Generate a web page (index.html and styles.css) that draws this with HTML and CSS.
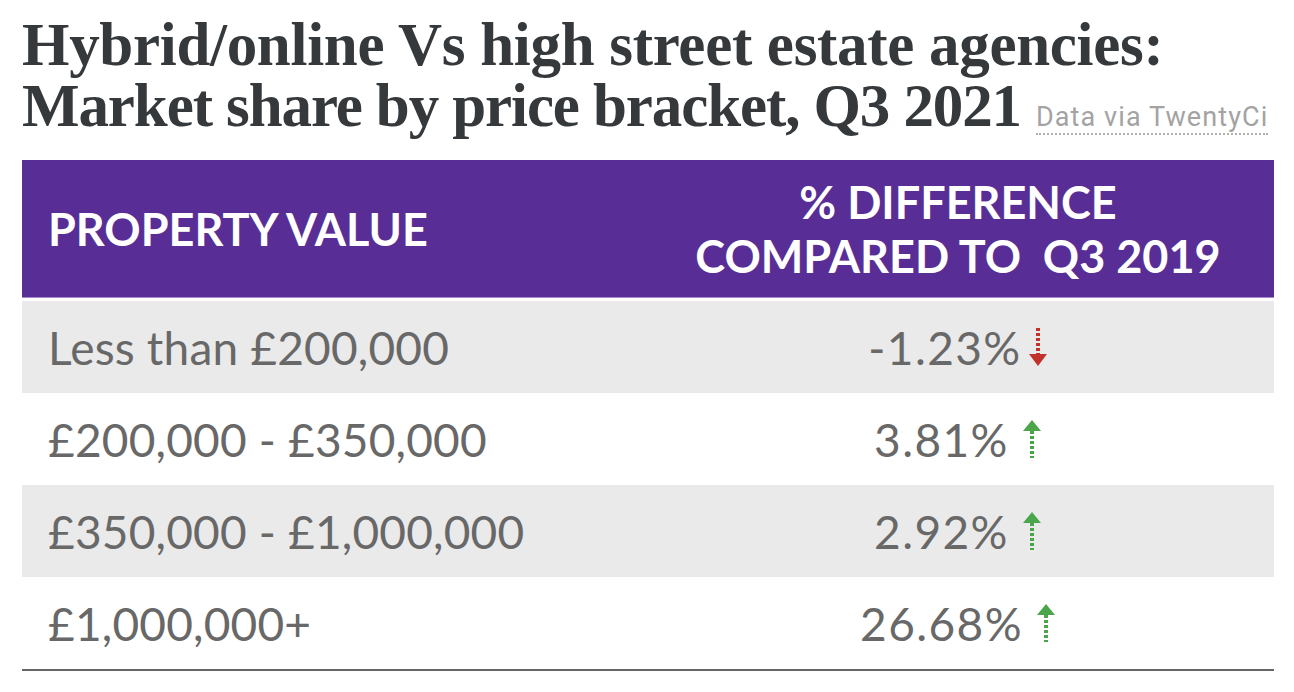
FILE: index.html
```html
<!DOCTYPE html>
<html lang="en">
<head>
<meta charset="utf-8">
<title>Hybrid/online Vs high street estate agencies</title>
<link rel="stylesheet" href="styles.css">
</head>
<body>
<div class="page">
  <h1 class="title">Hybrid/online Vs high street estate agencies:<br><span class="line2">Market share by price bracket, Q3 2021</span> <a class="source" href="#">Data via TwentyCi</a></h1>
  <div class="table">
    <div class="row head">
      <div class="cell left">PROPERTY VALUE</div>
      <div class="cell right">% DIFFERENCE<br>COMPARED TO&nbsp; Q3 2019</div>
    </div>
    <div class="row shade">
      <div class="cell left">Less than £200,000</div>
      <div class="cell right"><span class="val">-1.23%</span><svg class="arrow down" viewBox="0 0 20 38" width="20" height="38"><line x1="10" y1="0" x2="10" y2="27" stroke="#c3312b" stroke-width="4" stroke-dasharray="3 2"/><polygon points="1,26 19,26 10,38" fill="#c3312b"/></svg></div>
    </div>
    <div class="row">
      <div class="cell left">£200,000 - £350,000</div>
      <div class="cell right"><span class="val">3.81%</span><svg class="arrow up" viewBox="0 0 20 38" width="20" height="38"><polygon points="10,0 19,11 1,11" fill="#4ba64b"/><line x1="10" y1="11" x2="10" y2="38" stroke="#4ba64b" stroke-width="4" stroke-dasharray="3 2"/></svg></div>
    </div>
    <div class="row shade">
      <div class="cell left">£350,000 - £1,000,000</div>
      <div class="cell right"><span class="val">2.92%</span><svg class="arrow up" viewBox="0 0 20 38" width="20" height="38"><polygon points="10,0 19,11 1,11" fill="#4ba64b"/><line x1="10" y1="11" x2="10" y2="38" stroke="#4ba64b" stroke-width="4" stroke-dasharray="3 2"/></svg></div>
    </div>
    <div class="row last">
      <div class="cell left">£1,000,000+</div>
      <div class="cell right"><span class="val">26.68%</span><svg class="arrow up" viewBox="0 0 20 38" width="20" height="38"><polygon points="10,0 19,11 1,11" fill="#4ba64b"/><line x1="10" y1="11" x2="10" y2="38" stroke="#4ba64b" stroke-width="4" stroke-dasharray="3 2"/></svg></div>
    </div>
  </div>
</div>
</body>
</html>
```
FILE: styles.css
```css
html, body {
  margin: 0;
  padding: 0;
  background: #ffffff;
}
.page {
  padding: 14px 20px 0 22px;
}
.title {
  margin: 0;
  font-family: "Liberation Serif", "DejaVu Serif", serif;
  font-weight: 700;
  font-size: 61px;
  line-height: 61px;
  color: #35393c;
  letter-spacing: -0.3px;
  white-space: nowrap;
}
.line2 {
  letter-spacing: -1.1px;
}
.source {
  font-family: Roboto, "Liberation Sans", sans-serif;
  font-weight: 400;
  font-size: 27px;
  line-height: 1;
  letter-spacing: 1.1px;
  color: #a3a3a3;
  text-decoration: none;
  border-bottom: 2px dotted #b0b0b0;
}
.table {
  margin-top: 24px;
  display: flex;
  flex-direction: column;
  font-family: Lato, "Open Sans", sans-serif;
}
.row {
  display: grid;
  grid-template-columns: 620px 1fr;
  height: 92px;
  align-items: center;
  color: #686868;
  font-size: 46px;
  letter-spacing: 0.2px;
}
.row.head {
  height: 137px;
  background: #582e96;
  color: #ffffff;
  font-weight: 700;
  font-size: 45px;
  border-bottom: 1px solid #a38bcc;
  margin-bottom: 3px;
  letter-spacing: 0;
}
.row.shade {
  background: #eaeaea;
}
.row.last {
  border-bottom: 2px solid #666666;
}
.cell.left {
  padding-left: 26px;
}
.cell.right {
  display: flex;
  justify-content: center;
  align-items: center;
  text-align: center;
}
.head .cell.right {
  line-height: 54px;
}
.arrow {
  margin-left: 6px;
  flex: none;
}
.arrow.up {
  margin-left: 13px;
}
.val {
  letter-spacing: 1.4px;
}
```
